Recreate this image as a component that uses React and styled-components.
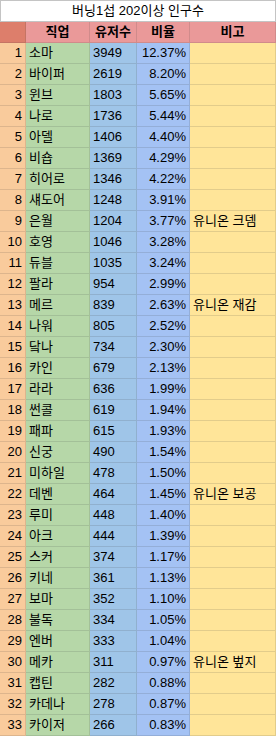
import React from "react";
import styled, { createGlobalStyle } from "styled-components";

const Global = createGlobalStyle`
  html, body { margin: 0; padding: 0; background: #ffffff; }
  body { font-family: "Liberation Sans", "Noto Sans CJK KR", sans-serif; }
  * { box-sizing: border-box; }
`;

const Sheet = styled.div`
  width: 276px;
  display: flex;
  flex-direction: column;
  font-size: 13px;
  color: #000000;
`;

const Title = styled.div`
  height: 22px;
  border: 1px solid #c4c4c4;
  background: #ffffff;
  display: flex;
  align-items: center;
  justify-content: center;
  line-height: 20px;
`;

const Row = styled.div`
  display: grid;
  grid-template-columns: 26px 64px 47px 53px 86px;
  height: 21px;
`;

const Cell = styled.div`
  background: ${(p) => p.$bg};
  border-right: 1px solid rgba(60, 60, 60, 0.15);
  border-bottom: 1px solid rgba(60, 60, 60, 0.15);
  line-height: 20px;
  padding: 0 3px;
  white-space: nowrap;
  overflow: hidden;
  text-align: ${(p) => p.$align || "left"};
  font-weight: ${(p) => (p.$bold ? 700 : 400)};
`;

const C = {
  corner: "#dd7e6b",
  head: "#ea9999",
  num: "#f9cb9c",
  job: "#b6d7a8",
  users: "#9fc5e8",
  ratio: "#a4c2f4",
  note: "#ffe599",
};

const data = [
  ["소마", 3949, "12.37%", ""],
  ["바이퍼", 2619, "8.20%", ""],
  ["윈브", 1803, "5.65%", ""],
  ["나로", 1736, "5.44%", ""],
  ["아델", 1406, "4.40%", ""],
  ["비숍", 1369, "4.29%", ""],
  ["히어로", 1346, "4.22%", ""],
  ["섀도어", 1248, "3.91%", ""],
  ["은월", 1204, "3.77%", "유니온 크뎀"],
  ["호영", 1046, "3.28%", ""],
  ["듀블", 1035, "3.24%", ""],
  ["팔라", 954, "2.99%", ""],
  ["메르", 839, "2.63%", "유니온 재감"],
  ["나워", 805, "2.52%", ""],
  ["닼나", 734, "2.30%", ""],
  ["카인", 679, "2.13%", ""],
  ["라라", 636, "1.99%", ""],
  ["썬콜", 619, "1.94%", ""],
  ["패파", 615, "1.93%", ""],
  ["신궁", 490, "1.54%", ""],
  ["미하일", 478, "1.50%", ""],
  ["데벤", 464, "1.45%", "유니온 보공"],
  ["루미", 448, "1.40%", ""],
  ["아크", 444, "1.39%", ""],
  ["스커", 374, "1.17%", ""],
  ["키네", 361, "1.13%", ""],
  ["보마", 352, "1.10%", ""],
  ["불독", 334, "1.05%", ""],
  ["엔버", 333, "1.04%", ""],
  ["메카", 311, "0.97%", "유니온 벞지"],
  ["캡틴", 282, "0.88%", ""],
  ["카데나", 278, "0.87%", ""],
  ["카이저", 266, "0.83%", ""],
];

export default function App() {
  return (
    <>
      <Global />
      <Sheet>
        <Title>버닝1섭 202이상 인구수</Title>
        <Row>
          <Cell $bg={C.corner} />
          <Cell $bg={C.head} $align="center" $bold>직업</Cell>
          <Cell $bg={C.head} $align="center" $bold>유저수</Cell>
          <Cell $bg={C.head} $align="center" $bold>비율</Cell>
          <Cell $bg={C.head} $align="center" $bold>비고</Cell>
        </Row>
        {data.map(([job, users, ratio, note], i) => (
          <Row key={job}>
            <Cell $bg={C.num} $align="right">{i + 1}</Cell>
            <Cell $bg={C.job}>{job}</Cell>
            <Cell $bg={C.users}>{users}</Cell>
            <Cell $bg={C.ratio} $align="right">{ratio}</Cell>
            <Cell $bg={C.note}>{note}</Cell>
          </Row>
        ))}
      </Sheet>
    </>
  );
}
